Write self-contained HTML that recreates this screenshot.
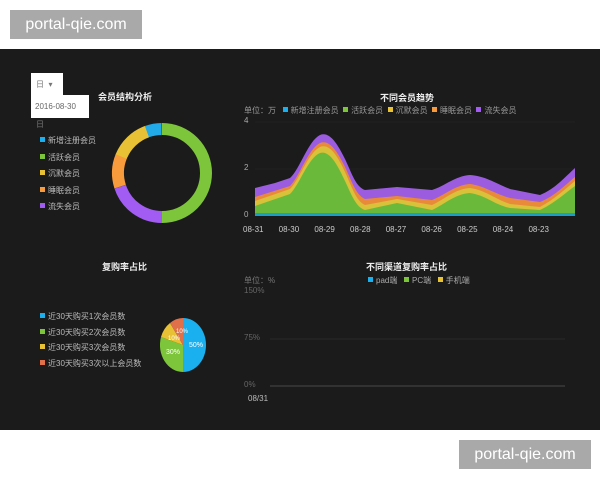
<!DOCTYPE html><html><head><meta charset="utf-8"><style>
body{margin:0;width:600px;height:480px;background:#fff;position:relative;overflow:hidden;font-family:"Liberation Sans","Noto Sans CJK SC",sans-serif}
.wm{position:absolute;background:#a9a9a9;color:#fff;font-size:16px;line-height:29px;text-align:center;width:132px}
#dark{position:absolute;left:0;top:49px;width:600px;height:381px;background:#1b1b1b}
.t{position:absolute;color:#ddd;font-size:8px;white-space:nowrap}
.b{font-weight:bold;color:#eee;font-size:9px}
.sq{display:inline-block;width:5px;height:5px;margin-right:3px;vertical-align:1px}
</style></head><body>
<div class="wm" style="left:10px;top:10px">portal-qie.com</div>
<div class="wm" style="left:459px;top:440px">portal-qie.com</div>
<div id="dark">
<svg width="600" height="381" style="position:absolute;left:0;top:0">
<g transform="translate(162,124)" fill="none" stroke-width="12">
<circle r="44" stroke="#7dc53a" stroke-dasharray="138.2 400" transform="rotate(-90)"/>
<circle r="44" stroke="#a25cf3" stroke-dasharray="55 400" transform="rotate(90)"/>
<circle r="44" stroke="#f89b3c" stroke-dasharray="31 400" transform="rotate(162)"/>
<circle r="44" stroke="#e8c234" stroke-dasharray="37 400" transform="rotate(202)"/>
<circle r="44" stroke="#22a9e8" stroke-dasharray="15 400" transform="rotate(250)"/>
</g>
<g stroke="#2a2a2a" stroke-width="0.6"><line x1="255" y1="73" x2="575" y2="73"/><line x1="255" y1="120" x2="575" y2="120"/></g>
<path d="M255,139 L275,134 L290,129 C300,120 308,92 320,86 C330,82 338,96 345,110 C352,125 356,138 365,141 L397,138 L432,141 C445,137 455,127 470,126 C485,127 495,134 510,140 L540,146 C555,140 565,128 575,119 L575,167 L255,167Z" fill="#9b5ce0"/>
<path d="M255,148 L290,137 C300,127 308,100 320,94 C330,90 338,104 345,118 C352,133 356,146 365,150 L397,147 L432,151 C445,146 455,136 470,135 C485,137 495,145 510,149 L540,153 C555,147 565,136 575,128 L575,167 L255,167Z" fill="#e98a3a"/>
<path d="M255,152 L290,140 C300,130 308,104 320,98 C330,94 338,108 345,123 C352,138 356,152 365,156 L397,150 L432,156 C445,150 455,140 470,139 C485,141 495,150 510,155 L540,158 C555,150 565,140 575,132 L575,167 L255,167Z" fill="#d9c13a"/>
<path d="M255,157 L290,145 C300,135 308,109 320,104 C330,101 338,117 345,132 C352,147 356,158 365,161 L397,154 L432,161 C445,155 455,145 470,144 C485,146 495,156 510,159 L540,161 C555,154 565,144 575,137 L575,167 L255,167Z" fill="#6bb93a"/>
<rect x="255" y="164" width="320" height="3" fill="#1a9ec8"/>
<line x1="270" y1="290" x2="565" y2="290" stroke="#2a2a2a"/>
<line x1="270" y1="337" x2="565" y2="337" stroke="#3a3a3a" stroke-width="1.5"/>
<g transform="translate(183,296)">
<path d="M0,0 L0,-27 A23,27 0 0 1 0,27Z" fill="#1ab0f0"/>
<path d="M0,0 L0,27 A23,27 0 0 1 -22,-8Z" fill="#7dc53a"/>
<path d="M0,0 L-22,-8 A23,27 0 0 1 -13,-22Z" fill="#e8c234"/>
<path d="M0,0 L-13,-22 A23,27 0 0 1 0,-27Z" fill="#e0704a"/>
<text x="6" y="2" fill="#fff" font-size="7">50%</text>
<text x="-17" y="9" fill="#fff" font-size="7">30%</text>
<text x="-15" y="-5" fill="#fff" font-size="6">10%</text>
<text x="-7" y="-12" fill="#fff" font-size="6">10%</text>
</g>
</svg>
<div style="position:absolute;left:31px;top:24px;width:32px;height:22px;background:#fff"></div>
<div style="position:absolute;left:31px;top:46px;width:58px;height:23px;background:#fff"></div>
<div class="t" style="left:36px;top:30px;color:#777">日 &nbsp;▾</div>
<div class="t" style="left:35px;top:53px;color:#666">2016-08-30</div>
<div class="t" style="left:36px;top:70px;color:#777">日</div>
<div class="t b" style="left:98px;top:41px">会员结构分析</div>
<div class="t" style="left:40px;top:84px;line-height:16.5px;color:#bbb">
<div><span class="sq" style="background:#1ab0f0"></span>新增注册会员</div>
<div><span class="sq" style="background:#7dc53a"></span>活跃会员</div>
<div><span class="sq" style="background:#e8c234"></span>沉默会员</div>
<div><span class="sq" style="background:#f89b3c"></span>睡眠会员</div>
<div><span class="sq" style="background:#a25cf3"></span>流失会员</div></div>
<div class="t b" style="left:380px;top:42px">不同会员趋势</div>
<div class="t" style="left:244px;top:56px;color:#999">单位：万 &nbsp;&nbsp;<span class="sq" style="background:#1ab0f0"></span>新增注册会员 &nbsp;<span class="sq" style="background:#7dc53a"></span>活跃会员 &nbsp;<span class="sq" style="background:#e8c234"></span>沉默会员 &nbsp;<span class="sq" style="background:#f89b3c"></span>睡眠会员 &nbsp;<span class="sq" style="background:#a25cf3"></span>流失会员</div>
<div class="t" style="left:244px;top:67px;color:#aaa">4</div>
<div class="t" style="left:244px;top:114px;color:#aaa">2</div>
<div class="t" style="left:244px;top:161px;color:#aaa">0</div>
<div class="t" style="left:243px;top:176px;width:330px;word-spacing:13px;color:#ccc">08-31 08-30 08-29 08-28 08-27 08-26 08-25 08-24 08-23</div>
<div class="t b" style="left:102px;top:211px">复购率占比</div>
<div class="t" style="left:40px;top:260px;line-height:15.7px;color:#bbb">
<div><span class="sq" style="background:#1ab0f0"></span>近30天购买1次会员数</div>
<div><span class="sq" style="background:#7dc53a"></span>近30天购买2次会员数</div>
<div><span class="sq" style="background:#e8c234"></span>近30天购买3次会员数</div>
<div><span class="sq" style="background:#e0704a"></span>近30天购买3次以上会员数</div></div>
<div class="t b" style="left:366px;top:211px">不同渠道复购率占比</div>
<div class="t" style="left:244px;top:226px;color:#777">单位：%</div>
<div class="t" style="left:368px;top:226px;color:#aaa"><span class="sq" style="background:#1ab0f0"></span>pad端 &nbsp;&nbsp;<span class="sq" style="background:#7dc53a"></span>PC端 &nbsp;&nbsp;<span class="sq" style="background:#e8c234"></span>手机端</div>
<div class="t" style="left:244px;top:237px;color:#666">150%</div>
<div class="t" style="left:244px;top:284px;color:#666">75%</div>
<div class="t" style="left:244px;top:331px;color:#666">0%</div>
<div class="t" style="left:248px;top:345px;color:#bbb">08/31</div>
</div>
</body></html>
